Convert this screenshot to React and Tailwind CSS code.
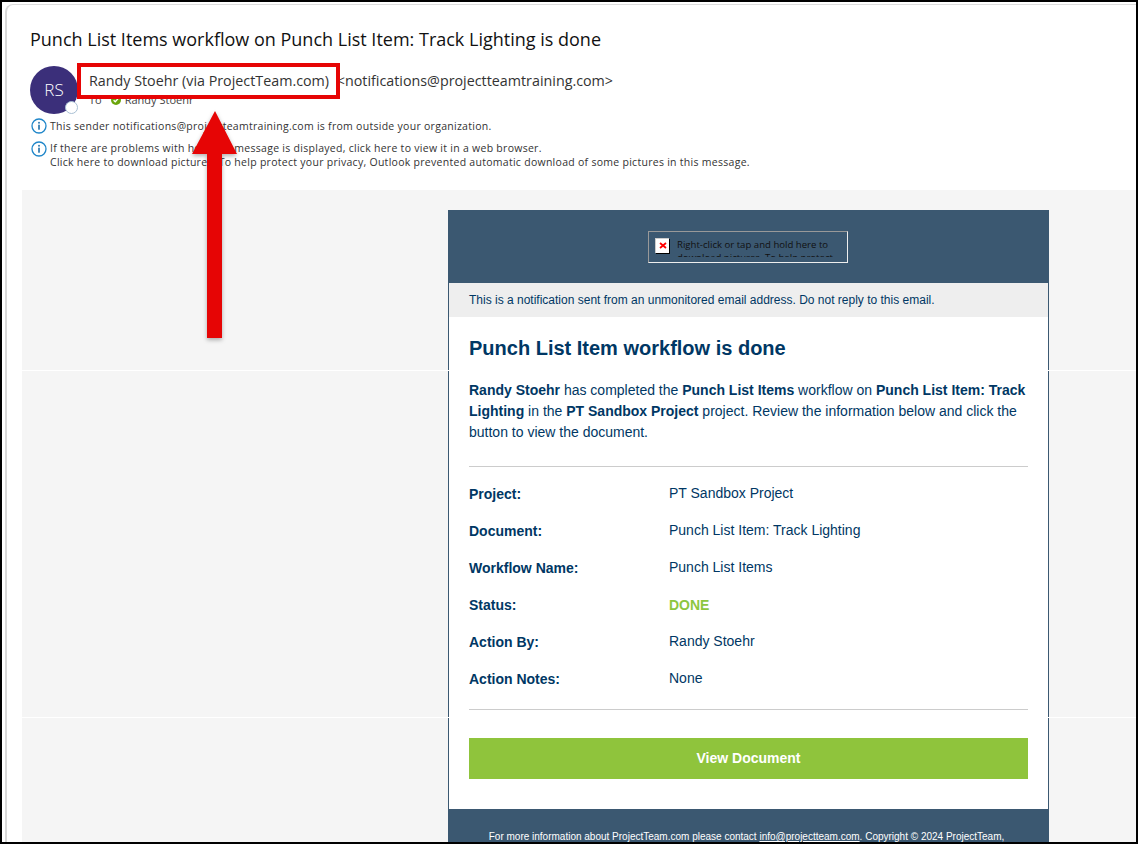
const details = [
  { label: "Project:", value: "PT Sandbox Project" },
  { label: "Document:", value: "Punch List Item: Track Lighting" },
  { label: "Workflow Name:", value: "Punch List Items" },
  { label: "Status:", value: "DONE", done: true },
  { label: "Action By:", value: "Randy Stoehr" },
  { label: "Action Notes:", value: "None" },
];

function InfoIcon() {
  return (
    <svg width="16" height="16" viewBox="0 0 16 16" className="shrink-0">
      <circle cx="8" cy="8" r="7" fill="white" stroke="#1f86c9" strokeWidth="1.3" />
      <rect x="7.2" y="6.7" width="1.6" height="5" fill="#1f6fa8" />
      <rect x="7.2" y="3.9" width="1.6" height="1.7" fill="#1f6fa8" />
    </svg>
  );
}

function BrokenImage() {
  return (
    <div className="shrink-0 flex items-center justify-center w-[14px] h-[15px] bg-white border-t border-l border-[#ccc] shadow-[1px_1px_0_#000]">
      <svg width="8" height="7" viewBox="0 0 8 7">
        <path d="M1 1l6 5M7 1L1 6" stroke="#f00" strokeWidth="1.8" fill="none" />
      </svg>
    </div>
  );
}

export default function App() {
  return (
    <div className="relative h-[844px] w-[1138px] overflow-hidden bg-white border-2 border-black font-['Open_Sans',sans-serif]">
      <div className="h-full pt-[2px] pl-[3px]">
        <div className="h-full bg-white rounded-tl-lg border-t border-l-2 border-t-[#dddddd] border-l-[#d8d8d8] flex flex-col">
          <div className="h-[185px] shrink-0 pl-[23px] pt-[22px] text-[#333]">
            <h1 className="text-[18px] leading-[25px] text-[#111]">
              Punch List Items workflow on Punch List Item: Track Lighting is done
            </h1>
            <div className="flex mt-[14px] h-[48px]">
              <div className="relative w-[48px] h-[48px] rounded-full bg-[#3b2f7a] text-white flex items-center justify-center text-[17px] font-light">
                RS
                <span className="absolute right-0 bottom-0 w-[13px] h-[13px] rounded-full bg-white border-[1.5px] border-[#a9c0d4]"></span>
              </div>
              <div className="ml-[11px]">
                <div className="text-[14.3px] leading-[20px] mt-[5px] text-[#333]">
                  Randy Stoehr (via ProjectTeam.com) <span className="ml-[4px]">&lt;notifications@projectteamtraining.com&gt;</span>
                </div>
                <div className="mt-[2px] flex items-center text-[11px] leading-[14px] text-[#444]">
                  <span>To</span>
                  <svg width="10" height="10" viewBox="0 0 10 10" className="ml-[9px]">
                    <circle cx="5" cy="5" r="5" fill="#6aa50c" />
                    <path d="M2.6 5.2l1.7 1.6 3-3.4" stroke="white" strokeWidth="1.3" fill="none" />
                  </svg>
                  <span className="ml-[4px]">Randy Stoehr</span>
                </div>
              </div>
            </div>
            <div className="ml-[1px] mt-[4px] flex items-center gap-[3px] text-[10.5px] leading-[16px] tracking-[0.28px]">
              <InfoIcon />
              <span>This sender notifications@projectteamtraining.com is from outside your organization.</span>
            </div>
            <div className="ml-[1px] mt-[7px] flex items-start gap-[3px] text-[10.5px] leading-[14px] tracking-[0.28px]">
              <InfoIcon />
              <span>
                If there are problems with how this message is displayed, click here to view it in a web browser.
                <br />
                Click here to download pictures. To help protect your privacy, Outlook prevented automatic download of some pictures in this message.
              </span>
            </div>
          </div>

          <div className="flex-1 ml-[15px] bg-[#f5f5f5] pt-[20px] pl-[426px]">
            <div className="w-[601px] font-['Liberation_Sans',sans-serif] text-[#003764]">
              <div className="h-[73px] bg-[#3b5871] flex items-center justify-center">
                <div className="w-[200px] h-[32px] ml-[-1px] border border-t-[#999] border-l-[#999] border-r-[#eee] border-b-[#eee] flex pl-[6px] pt-[6px] gap-[8px]">
                  <BrokenImage />
                  <div className="h-[19px] overflow-hidden">
                    <span className="block text-[9.6px] leading-[13px] text-[#111] font-['Open_Sans',sans-serif]">
                      Right-click or tap and hold here to download pictures. To help protect
                    </span>
                  </div>
                </div>
              </div>
              <div className="border-x border-[#3b5871] bg-white">
                <div className="h-[34px] bg-[#eeeeee] pl-[20px] flex items-center text-[12px]">
                  This is a notification sent from an unmonitored email address. Do not reply to this email.
                </div>
                <div className="px-[20px]">
                  <h2 className="text-[20px] leading-[24px] font-bold mt-[19px]">Punch List Item workflow is done</h2>
                  <p className="mt-[20px] text-[14px] leading-[21px]">
                    <b>Randy Stoehr</b> has completed the <b>Punch List Items</b> workflow on <b>Punch List Item: Track Lighting</b> in the <b>PT Sandbox Project</b> project. Review the information below and click the button to view the document.
                  </p>
                  <div className="mt-[23px] h-px bg-[#ccc]"></div>
                  <div className="pt-[9px]">
                    {details.map((row) => (
                      <div key={row.label} className="flex h-[37px] items-center text-[14px]">
                        <span className="w-[200px] font-bold">{row.label}</span>
                        <span className={row.done ? "font-bold text-[#8dc63f]" : "mb-[2px]"}>{row.value}</span>
                      </div>
                    ))}
                  </div>
                  <div className="mt-[11px] h-px bg-[#ccc]"></div>
                  <div className="mt-[28px] h-[41px] bg-[#8fc43c] flex items-center justify-center text-white text-[14px] font-bold">
                    View Document
                  </div>
                </div>
                <div className="h-[30px]"></div>
              </div>
              <div className="bg-[#3b5871] text-white text-[10px] text-center pt-[20px] pb-[20px] pr-[4px]">
                For more information about ProjectTeam.com please contact <span className="underline">info@projectteam.com</span>. Copyright © 2024 ProjectTeam,
              </div>
            </div>
          </div>
        </div>
      </div>

      {/* seams between the tiled message panels */}
      <div className="absolute left-[20px] right-0 top-[368px] h-px bg-white"></div>
      <div className="absolute left-[20px] right-0 top-[715px] h-px bg-white"></div>

      {/* annotation */}
      <div className="absolute left-[75px] top-[61px] w-[263px] h-[36px] border-[4px] border-[#e60505]"></div>
      <svg className="absolute left-[188px] top-[107px] drop-shadow-[0_2px_2px_rgba(0,0,0,0.3)]" width="50" height="235" viewBox="0 0 50 235">
        <polygon points="25,2 47,45 32,45 32,229 17,229 17,45 2,45" fill="#e60505" />
      </svg>
    </div>
  );
}
